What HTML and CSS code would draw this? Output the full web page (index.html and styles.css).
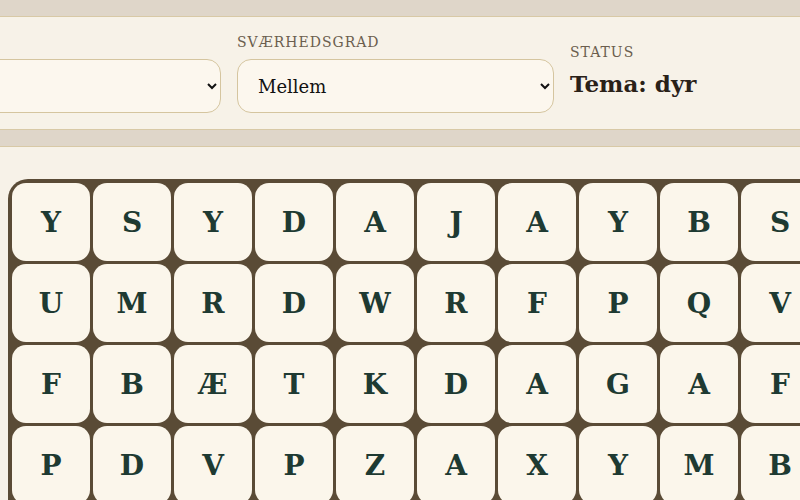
FILE: index.html
```html
<!DOCTYPE html>
<html lang="da">
<head>
<meta charset="utf-8">
<title>Ordjagt</title>
<link rel="stylesheet" href="styles.css">
</head>
<body>
<div class="page">
  <section class="card controls">
    <div class="field">
      <label class="label" for="theme">Tema</label>
      <select id="theme" class="select"><option>Dyr</option></select>
    </div>
    <div class="field">
      <label class="label" for="level">Sværhedsgrad</label>
      <select id="level" class="select"><option>Mellem</option></select>
    </div>
    <div class="status">
      <div class="label">Status</div>
      <div class="status-value">Tema: dyr</div>
    </div>
  </section>
  <section class="card game">
    <div class="board">
      <div class="cell">Y</div><div class="cell">S</div><div class="cell">Y</div><div class="cell">D</div><div class="cell">A</div><div class="cell">J</div><div class="cell">A</div><div class="cell">Y</div><div class="cell">B</div><div class="cell">S</div><div class="cell">K</div><div class="cell">O</div>
      <div class="cell">U</div><div class="cell">M</div><div class="cell">R</div><div class="cell">D</div><div class="cell">W</div><div class="cell">R</div><div class="cell">F</div><div class="cell">P</div><div class="cell">Q</div><div class="cell">V</div><div class="cell">L</div><div class="cell">E</div>
      <div class="cell">F</div><div class="cell">B</div><div class="cell">Æ</div><div class="cell">T</div><div class="cell">K</div><div class="cell">D</div><div class="cell">A</div><div class="cell">G</div><div class="cell">A</div><div class="cell">F</div><div class="cell">N</div><div class="cell">Ø</div>
      <div class="cell">P</div><div class="cell">D</div><div class="cell">V</div><div class="cell">P</div><div class="cell">Z</div><div class="cell">A</div><div class="cell">X</div><div class="cell">Y</div><div class="cell">M</div><div class="cell">B</div><div class="cell">H</div><div class="cell">Å</div>
      <div class="cell">H</div><div class="cell">E</div><div class="cell">S</div><div class="cell">T</div><div class="cell">R</div><div class="cell">K</div><div class="cell">O</div><div class="cell">L</div><div class="cell">U</div><div class="cell">G</div><div class="cell">I</div><div class="cell">N</div>
    </div>
  </section>
</div>
</body>
</html>
```

FILE: styles.css
```css
html, body {
  margin: 0;
  padding: 0;
  overflow: hidden;
  background: #dfd6c9;
  font-family: "DejaVu Serif", "Liberation Serif", serif;
}

.page {
  width: 1200px;
  margin-left: -112px;
  padding-top: 16px;
  display: flex;
  flex-direction: column;
  gap: 16px;
}

.card {
  background: #f7f2e8;
  border: 1px solid #d8c9a6;
  border-radius: 18px;
}

.controls {
  display: grid;
  grid-template-columns: 317px 317px auto;
  column-gap: 16px;
  align-items: center;
  padding: 16px 15px 16px 15px;
}

.field {
  display: flex;
  flex-direction: column;
  gap: 8px;
}

.label {
  font-size: 14px;
  line-height: 18px;
  letter-spacing: 1px;
  text-transform: uppercase;
  color: #6b5e4e;
}

.select {
  height: 54px;
  border: 1px solid #d5c59f;
  border-radius: 14px;
  background: #fcf7ee;
  color: #111;
  font-family: "DejaVu Serif", "Liberation Serif", serif;
  font-size: 18px;
  padding: 0 8px 0 16px;
}

.status {
  display: flex;
  flex-direction: column;
  gap: 8px;
  padding-bottom: 4px;
}

.status-value {
  font-size: 23px;
  font-weight: bold;
  line-height: 30px;
  color: #2a2118;
}

.game {
  padding: 32px 16px 40px 119px;
  border-radius: 18px;
}

.board {
  display: grid;
  grid-template-columns: repeat(12, 78px);
  grid-auto-rows: 78px;
  gap: 3px;
  padding: 4px;
  width: max-content;
  background: #5a4b36;
  border-radius: 20px;
}

.cell {
  display: flex;
  align-items: center;
  justify-content: center;
  background: #fbf6eb;
  border-radius: 14px;
  font-size: 28px;
  font-weight: bold;
  color: #1e3a32;
}
```
